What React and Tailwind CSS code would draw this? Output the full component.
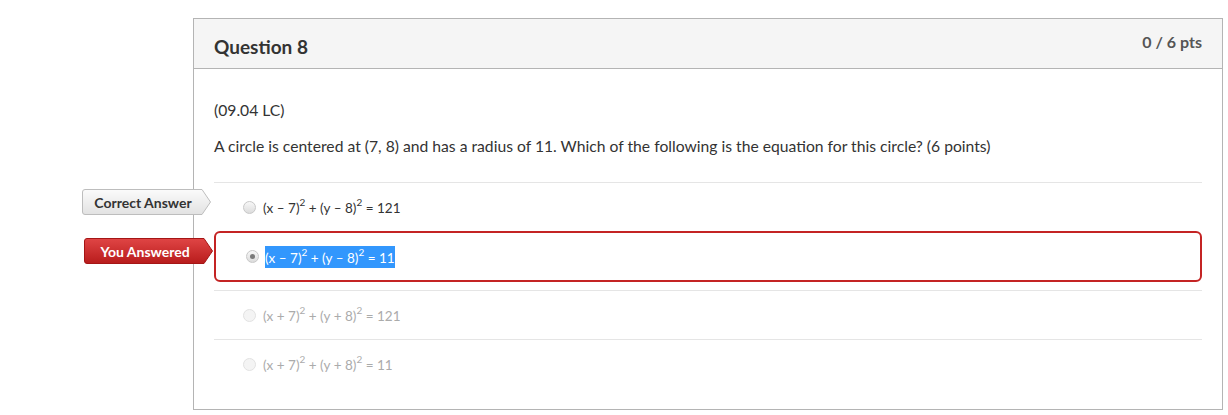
import React from 'react';

const Label = ({ text, variant }) => {
  const red = variant === 'red';
  return (
    <div className="absolute w-[130px] h-[26px] flex items-center">
      <svg className="absolute inset-0" width="130" height="26" viewBox="0 0 130 26">
        <defs>
          <linearGradient id={`g-${variant}`} x1="0" y1="0" x2="0" y2="1">
            <stop offset="0" stopColor={red ? '#e04545' : '#fbfbfb'} />
            <stop offset="1" stopColor={red ? '#b81c1c' : '#e2e2e2'} />
          </linearGradient>
        </defs>
        <path
          d="M3 0.5 H120 L128.5 13 L120 25.5 H3 Q0.5 25.5 0.5 23 V3 Q0.5 0.5 3 0.5 Z"
          fill={`url(#g-${variant})`}
          stroke={red ? '#a51515' : '#bdbdbd'}
        />
      </svg>
      <span className={`relative w-[122px] text-center text-[14px] font-bold ${red ? 'text-white' : 'text-[#333]'}`}>
        {text}
      </span>
    </div>
  );
};

const Radio = ({ checked, disabled }) => (
  <span
    className={`w-[13px] h-[13px] rounded-full border flex items-center justify-center shrink-0 ${
      disabled ? 'border-[#e2e2e2] bg-[#f4f4f4]' : 'border-[#c8c8c8] bg-gradient-to-b from-[#f8f8f8] to-[#dcdcdc]'
    }`}
  >
    {checked && <span className="w-[5px] h-[5px] rounded-full bg-[#7a7a7a]" />}
  </span>
);

const Sup = () => <sup className="text-[10px] top-[-0.7em]">2</sup>;

const Eq = ({ a, b, r }) => (
  <>
    (x {a} 7)<Sup /> + (y {b} 8)<Sup /> = {r}
  </>
);

export default function App() {
  return (
    <div className="min-h-[415px] bg-white pt-[18px] pl-[193px] pr-[5px]" style={{ fontFamily: 'Lato, "Open Sans", sans-serif' }}>
      <div className="w-[1030px] border border-[#b4b4b4] text-[#2d3b45]">
        <div className="h-[50px] bg-[#f5f5f5] border-b border-[#b4b4b4] px-[20px] flex justify-between">
          <h2 className="text-[19px] font-bold pt-[14px] text-[#333]">Question 8</h2>
          <span className="text-[16px] font-bold pt-[11px] text-[#555]">0 / 6 pts</span>
        </div>
        <div className="px-[20px] pb-[21px]">
          <p className="text-[15.7px] leading-[22px] text-[#333] pt-[30px]">(09.04 LC)</p>
          <p className="text-[15.7px] leading-[22px] text-[#333] mt-[14px]">
            A circle is centered at (7, 8) and has a radius of 11. Which of the following is the equation for this circle? (6 points)
          </p>
          <div className="mt-[25px]">
            <div className="relative border-t border-[#e5e5e5] h-[49px] flex items-center pl-[29px] gap-[7px] text-[13.5px] text-[#333]">
              <div className="absolute left-[-132px] top-[6px]">
                <Label text="Correct Answer" variant="gray" />
              </div>
              <Radio />
              <span className="pt-[3px]"><Eq a="–" b="–" r="121" /></span>
            </div>
            <div className="relative border-2 border-[#c42424] rounded-[6px] h-[51px] flex items-center pl-[30px] gap-[6px] text-[13.5px]">
              <div className="absolute left-[-132px] top-[5px]">
                <Label text="You Answered" variant="red" />
              </div>
              <Radio checked />
              <span className="bg-[#3297fd] text-white pt-[3px] leading-[19px]"><Eq a="–" b="–" r="11" /></span>
            </div>
            <div className="h-[8px]" />
            <div className="border-t border-[#e5e5e5] h-[49px] flex items-center pl-[29px] gap-[7px] text-[13.5px] text-[#ababab]">
              <Radio disabled />
              <span className="pt-[3px]"><Eq a="+" b="+" r="121" /></span>
            </div>
            <div className="border-t border-[#e5e5e5] h-[49px] flex items-center pl-[29px] gap-[7px] text-[13.5px] text-[#ababab]">
              <Radio disabled />
              <span className="pt-[3px]"><Eq a="+" b="+" r="11" /></span>
            </div>
          </div>
        </div>
      </div>
    </div>
  );
}
